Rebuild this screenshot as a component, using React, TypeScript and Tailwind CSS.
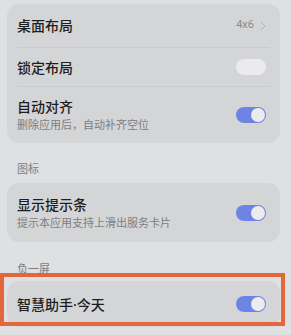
import React from 'react';

const Toggle = ({ on }: { on: boolean }) => (
  <div
    className={`flex h-[16px] w-[30px] shrink-0 items-center rounded-full px-[1px] ${
      on ? 'justify-end bg-[#6e84e4]' : 'justify-start bg-[#ebebed]'
    }`}
  >
    {on && <div className="h-[14px] w-[14px] rounded-full bg-[#ececee]" />}
  </div>
);

const Divider = () => <div className="mx-[10px] h-px bg-[#c9cacc]" />;

export default function App() {
  return (
    <div
      className="relative h-[335px] w-[291px] overflow-hidden bg-[#dfe0e2] px-[7px] pt-[4px]"
      style={{ fontFamily: '"Noto Sans CJK SC", "Noto Sans", sans-serif' }}
    >
      <div className="w-[273px] rounded-[12px] bg-[#d4d5d7]">
        <div className="flex h-[43px] items-center justify-between pl-[10px] pr-[14px]">
          <span className="text-[14px] font-medium text-[#1e1e1e]">桌面布局</span>
          <div className="flex items-center gap-[6px]">
            <span className="text-[11px] text-[#8a8a8c]" style={{ fontFamily: 'Roboto, sans-serif' }}>
              4x6
            </span>
            <svg width="6" height="10" viewBox="0 0 6 10" fill="none">
              <path d="M1 1l4 4-4 4" stroke="#b0b1b3" strokeWidth="1" strokeLinecap="round" strokeLinejoin="round" />
            </svg>
          </div>
        </div>
        <Divider />
        <div className="flex h-[38px] items-center justify-between pl-[10px] pr-[14px]">
          <span className="text-[14px] font-medium text-[#1e1e1e]">锁定布局</span>
          <Toggle on={false} />
        </div>
        <Divider />
        <div className="flex h-[56px] items-center justify-between pl-[10px] pr-[14px]">
          <div className="flex flex-col">
            <span className="text-[14px] font-medium leading-[19px] text-[#1e1e1e]">自动对齐</span>
            <span className="text-[11px] leading-[17px] text-[#7d7e80]">删除应用后，自动补齐空位</span>
          </div>
          <Toggle on />
        </div>
      </div>

      <div className="flex h-[40px] items-center pl-[10px] pt-[10px] text-[11px] text-[#7d7e80]">图标</div>

      <div className="flex h-[59px] w-[273px] items-center justify-between rounded-[12px] bg-[#d4d5d7] pl-[10px] pr-[14px]">
        <div className="flex flex-col">
          <span className="text-[14px] font-medium leading-[19px] text-[#1e1e1e]">显示提示条</span>
          <span className="text-[11px] leading-[17px] text-[#7d7e80]">提示本应用支持上滑出服务卡片</span>
        </div>
        <Toggle on />
      </div>

      <div className="flex h-[39px] items-center pl-[10px] pt-[14px] text-[11px] text-[#7d7e80]">负一屏</div>

      <div className="flex h-[46px] w-[273px] items-center justify-between rounded-[12px] bg-[#d4d5d7] pl-[10px] pr-[14px]">
        <span className="text-[14px] font-medium text-[#1e1e1e]">
          智慧助手<span style={{ fontFamily: '"Noto Sans", sans-serif' }}>·</span>今天
        </span>
        <Toggle on />
      </div>

      <div className="absolute left-0 top-[273px] h-[53px] w-[285px] border-[4px] border-[#e2673a]" />
    </div>
  );
}
